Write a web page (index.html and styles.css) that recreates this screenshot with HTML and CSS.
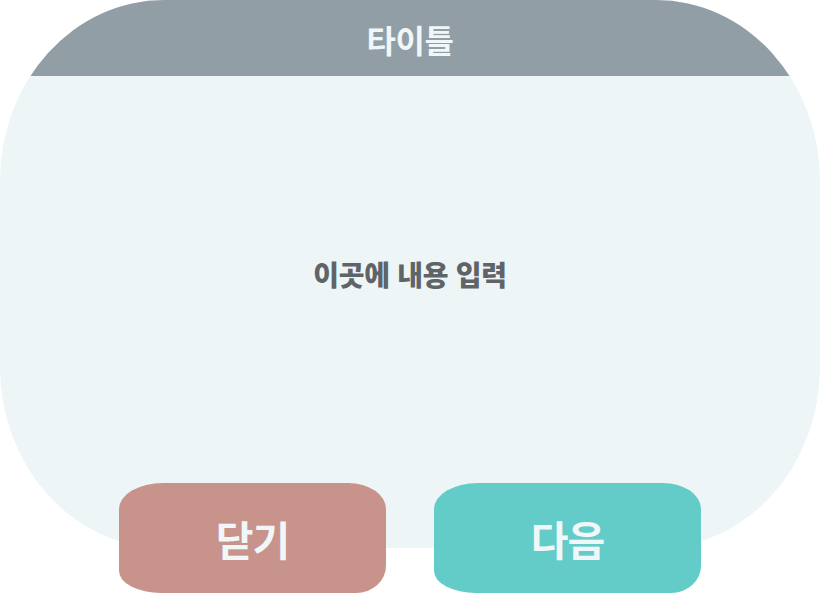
FILE: index.html
```html
<!DOCTYPE html>
<html lang="ko">
<head>
<meta charset="utf-8">
<title>타이틀</title>
<link rel="stylesheet" href="styles.css">
</head>
<body>
<div class="dialog">
  <div class="card">
    <div class="card-header">타이틀</div>
    <div class="card-body">이곳에 내용 입력</div>
  </div>
  <div class="actions">
    <button class="btn btn-close">닫기</button>
    <button class="btn btn-next">다음</button>
  </div>
</div>
</body>
</html>
```

FILE: styles.css
```css
html, body {
  margin: 0;
  padding: 0;
  background: #ffffff;
}

body {
  width: 820px;
  height: 594px;
  overflow: hidden;
  font-family: "Noto Sans CJK KR", "Noto Sans", sans-serif;
}

.dialog {
  display: flex;
  flex-direction: column;
}

.card {
  height: 548px;
  display: flex;
  flex-direction: column;
  background: #edf5f7;
  border-radius: 20% / 33%;
  overflow: hidden;
}

.card-header {
  height: 76px;
  flex: none;
  background: #929ea5;
  color: #f1f6f8;
  font-size: 32px;
  font-weight: 700;
  display: flex;
  align-items: center;
  justify-content: center;
  letter-spacing: -0.5px;
  padding-top: 2px;
  box-sizing: border-box;
}

.card-body {
  flex: 1;
  display: flex;
  align-items: center;
  justify-content: center;
  padding-bottom: 76px;
  color: #5f6468;
  font-size: 28px;
  font-weight: 900;
  letter-spacing: -0.3px;
}

.actions {
  margin-top: -65px;
  display: flex;
  justify-content: center;
  gap: 48px;
}

.btn {
  width: 267px;
  height: 110px;
  border: none;
  padding: 0;
  color: #f1f6f8;
  font-family: inherit;
  font-size: 41px;
  font-weight: 700;
  letter-spacing: -1px;
  border-radius: 44px 38px 30px 42px / 26px 26px 27px 22px;
}

.btn-close {
  background: #c8938b;
}

.btn-next {
  background: #64ccc8;
}
```
